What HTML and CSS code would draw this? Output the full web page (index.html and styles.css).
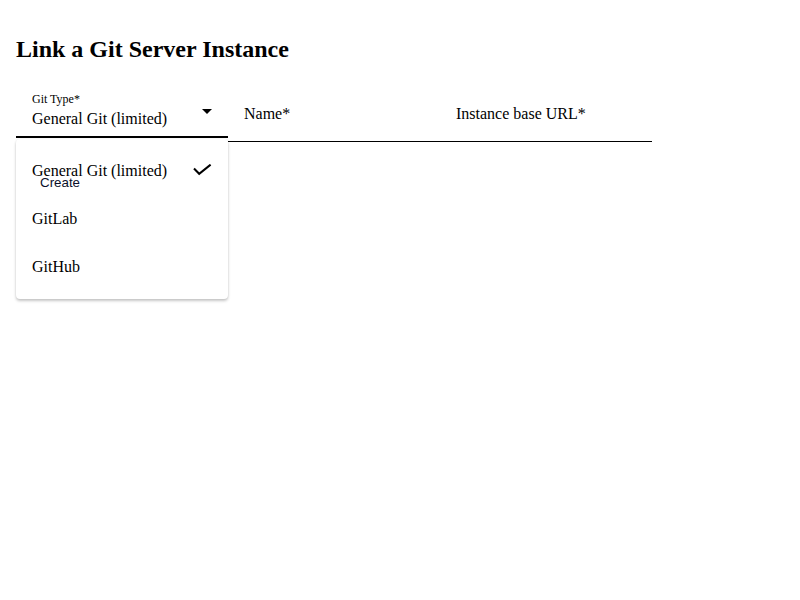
FILE: index.html
```html
<!DOCTYPE html>
<html>
<head>
<meta charset="utf-8">
<link rel="stylesheet" href="styles.css">
</head>
<body>
<div class="page">
  <h2 class="title">Link a Git Server Instance</h2>
  <div class="fields">
    <div class="select-wrap">
      <div class="select">
        <div class="select-text">
          <div class="select-label">Git Type*</div>
          <div class="select-value">General Git (limited)</div>
        </div>
        <svg class="arrow" width="10" height="5" viewBox="0 0 10 5"><path d="M0 0h10L5 5z" fill="#000"/></svg>
      </div>
      <div class="menu">
        <div class="menu-item">
          <span>General Git (limited)</span>
          <svg class="check" width="20" height="14" viewBox="0 0 20 14"><path d="M1 4.5l5.2 5.3L17.6 0.6" fill="none" stroke="#000" stroke-width="2"/></svg>
        </div>
        <div class="menu-item">GitLab</div>
        <div class="menu-item">GitHub</div>
      </div>
    </div>
    <div class="field">Name*</div>
    <div class="field">Instance base URL*</div>
  </div>
  <button class="create">Create</button>
</div>
</body>
</html>
```

FILE: styles.css
```css
html, body {
  margin: 0;
  background: #fff;
}
body {
  font-family: "Liberation Serif", "Times New Roman", serif;
  color: #000;
}
.page {
  box-sizing: border-box;
  min-height: 600px;
  padding: 36px 16px 0;
}
.title {
  margin: 0;
  font-size: 24px;
  font-weight: bold;
  line-height: normal;
}
.fields {
  position: relative;
  z-index: 1;
  display: flex;
  align-items: flex-start;
  margin-top: 25px;
  width: 636px;
}
.select-wrap {
  position: relative;
  width: 212px;
}
.select {
  box-sizing: border-box;
  padding: 4px 16px 7px;
  border-bottom: 2px solid #000;
  display: flex;
  align-items: center;
  justify-content: space-between;
}
.select-label {
  font-size: 12px;
  line-height: 14px;
}
.select-value {
  margin-top: 3px;
  font-size: 16px;
  line-height: 20px;
}
.arrow {
  display: block;
  margin-top: 1px;
}
.field {
  width: 212px;
  box-sizing: border-box;
  padding: 16px 16px 17px;
  font-size: 16px;
  line-height: 20px;
  border-bottom: 1px solid #000;
}
.menu {
  position: absolute;
  top: calc(100% + 1px);
  left: 0;
  width: 212px;
  padding: 8px 0;
  background: #fff;
  border-radius: 4px;
  box-shadow: 0 2px 3px rgba(0,0,0,0.22), 0 0 2px rgba(0,0,0,0.08);
}
.menu-item {
  height: 48px;
  box-sizing: border-box;
  padding: 0 16px;
  display: flex;
  align-items: center;
  justify-content: space-between;
  font-size: 16px;
  line-height: 24px;
}
.check {
  display: block;
  margin-right: -1px;
}
.create {
  position: relative;
  z-index: 2;
  display: block;
  margin-top: 27px;
  padding: 6px 24px;
  border: none;
  background: transparent;
  font-family: "Liberation Sans", Arial, sans-serif;
  font-size: 13.33px;
  color: #0a0f2a;
}
```
